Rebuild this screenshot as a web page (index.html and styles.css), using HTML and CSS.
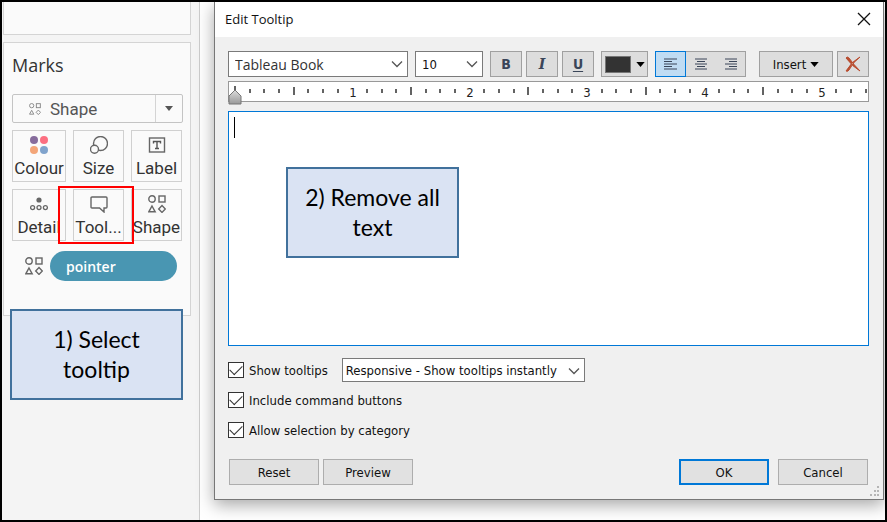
FILE: index.html
```html
<!DOCTYPE html>
<html lang="en">
<head>
<meta charset="utf-8">
<title>Edit Tooltip</title>
<link rel="stylesheet" href="styles.css">
</head>
<body>
<svg class="defs" aria-hidden="true">
  <symbol id="shapes" viewBox="0 0 18 18">
    <g fill="none" stroke="currentColor" stroke-width="1.4">
      <circle cx="4" cy="4" r="3.2"/><rect x="11" y="1" width="6" height="6"/>
      <path d="M4 11 L7.2 16.8 H0.8 Z"/><path d="M14 10.6 L17.3 14 L14 17.4 L10.7 14 Z"/>
    </g>
  </symbol>
  <symbol id="chevron" viewBox="0 0 12 8"><path d="M1 1.5 L6 6.5 L11 1.5" fill="none" stroke="#555" stroke-width="1.3"/></symbol>
  <symbol id="caret" viewBox="0 0 10 6"><path d="M0 0 H10 L5 6 Z" fill="currentColor"/></symbol>
</svg>
<main class="frame">
  <aside class="side">
    <section class="card filters"></section>
    <section class="card marks">
      <h2>Marks</h2>
      <div class="mark-type">
        <svg class="type-icon"><use href="#shapes"/></svg>
        <select aria-label="Mark type"><option>Shape</option></select>
        <span class="type-arrow"><svg><use href="#caret"/></svg></span>
      </div>
      <div class="mark-grid">
        <button type="button"><svg viewBox="0 0 18 18"><circle cx="4" cy="4" r="4" fill="#866c9c"/><circle cx="14" cy="4" r="4" fill="#fc6f81"/><circle cx="4" cy="14" r="4" fill="#f3a578"/><circle cx="14" cy="14" r="4" fill="#80a3cc"/></svg><span>Colour</span></button>
        <button type="button"><svg viewBox="0 0 18 18"><g fill="#fafafa" stroke="#666" stroke-width="1.4"><circle cx="10.5" cy="7.5" r="7"/><circle cx="4.5" cy="13.2" r="4"/></g></svg><span>Size</span></button>
        <button type="button"><svg viewBox="0 0 18 18"><rect x="1.5" y="2" width="15" height="14" fill="none" stroke="#666" stroke-width="1.4"/><path d="M5.5 7.5 V5.5 H12.5 V7.5 M9 5.5 V12.5 M7 12.5 H11" fill="none" stroke="#555" stroke-width="1.4"/></svg><span>Label</span></button>
        <button type="button"><svg viewBox="0 0 18 18"><circle cx="9" cy="5" r="2.6" fill="#666"/><g fill="none" stroke="#666" stroke-width="1.3"><circle cx="2.6" cy="12.6" r="2"/><circle cx="9" cy="12.6" r="2"/><circle cx="15.4" cy="12.6" r="2"/></g></svg><span>Detail</span></button>
        <button type="button" class="selected"><svg viewBox="0 0 18 18"><path d="M2 2 H16 Q17 2 17 3 V12 Q17 13 16 13 H14 V17 L9.5 13 H2 Q1 13 1 12 V3 Q1 2 2 2 Z" fill="none" stroke="#666" stroke-width="1.4"/></svg><span>Tool...</span></button>
        <button type="button"><svg><use href="#shapes"/></svg><span>Shape</span></button>
      </div>
      <div class="pill-row"><svg><use href="#shapes"/></svg><button type="button" class="pill">pointer</button></div>
    </section>
    <div class="callout step-one">1) Select tooltip</div>
  </aside>
  <div class="stage">
    <form class="dialog" role="dialog" aria-label="Edit Tooltip">
      <header class="titlebar">
        <h1>Edit Tooltip</h1>
        <button type="button" class="close" aria-label="Close"><svg viewBox="0 0 14 14"><path d="M1 1 L13 13 M13 1 L1 13" stroke="#111" stroke-width="1.3"/></svg></button>
      </header>
      <div class="content">
        <div class="toolbar">
          <div class="combo font"><select aria-label="Font"><option>Tableau Book</option></select><svg><use href="#chevron"/></svg></div>
          <div class="combo size"><select aria-label="Font size"><option>10</option></select><svg><use href="#chevron"/></svg></div>
          <div class="tools styles">
            <button type="button" class="tool bold">B</button>
            <button type="button" class="tool italic">I</button>
            <button type="button" class="tool under">U</button>
          </div>
          <button type="button" class="tool colour" aria-label="Text colour"><span class="swatch"></span><svg><use href="#caret"/></svg></button>
          <div class="tools aligns">
            <button type="button" class="tool on" aria-label="Align left"><svg viewBox="0 0 14 12"><path d="M0 1 H13 M0 3.5 H8 M0 6 H13 M0 8.5 H8 M0 11 H13"/></svg></button>
            <button type="button" class="tool" aria-label="Align centre"><svg viewBox="0 0 14 12"><path d="M1 1 H13 M3 3.5 H11 M1 6 H13 M3 8.5 H11 M1 11 H13"/></svg></button>
            <button type="button" class="tool" aria-label="Align right"><svg viewBox="0 0 14 12"><path d="M1 1 H13 M5 3.5 H13 M1 6 H13 M5 8.5 H13 M1 11 H13"/></svg></button>
          </div>
          <div class="tools last">
            <button type="button" class="tool insert">Insert <svg><use href="#caret"/></svg></button>
            <button type="button" class="tool" aria-label="Clear"><svg class="clear" viewBox="0 0 16 16"><path d="M1 2 Q2 0 4 2 Q9 9 15 15 Q8 11 1 2 Z M15 1 Q7 5 1 15 Q3 16 4 14 Q8 6 15 1 Z" fill="#b94d30" stroke="#b94d30" stroke-width="1" stroke-linejoin="round"/></svg></button>
          </div>
        </div>
        <div class="ruler">
          <svg class="scale">
            <path class="minor" d="M21 7v4M35 7v4M50 7v4M79 7v4M94 7v4M109 7v4M138 7v4M153 7v4M167 7v4M197 7v4M211 7v4M226 7v4M255 7v4M270 7v4M285 7v4M314 7v4M329 7v4M343 7v4M373 7v4M387 7v4M402 7v4M431 7v4M446 7v4M461 7v4M490 7v4M505 7v4M519 7v4M549 7v4M563 7v4M578 7v4M607 7v4M622 7v4M637 7v4"/>
            <path class="minor" d="M6 4v8M65 5v8M182 5v8M299 5v8M417 5v8M534 5v8"/>
            <text x="124" y="15">1</text><text x="241" y="15">2</text><text x="358" y="15">3</text><text x="476" y="15">4</text><text x="593" y="15">5</text>
          </svg>
          <svg class="marker" viewBox="0 0 14 16"><defs><linearGradient id="metal" x2="0" y2="1"><stop stop-color="#ddd"/><stop offset="1" stop-color="#999"/></linearGradient></defs><path d="M7 1 L13 7 V15 H1 V7 Z" fill="url(#metal)" stroke="#777"/></svg>
        </div>
        <div class="editor">
          <textarea aria-label="Tooltip text"></textarea>
          <span class="cursor"></span>
          <div class="callout step-two">2) Remove all text</div>
        </div>
        <div class="options">
          <div class="option"><label><input type="checkbox" checked>Show tooltips</label>
            <div class="combo mode"><select aria-label="Tooltip mode"><option>Responsive - Show tooltips instantly</option></select><svg><use href="#chevron"/></svg></div></div>
          <div class="option"><label><input type="checkbox" checked>Include command buttons</label></div>
          <div class="option"><label><input type="checkbox" checked>Allow selection by category</label></div>
        </div>
        <footer class="actions">
          <button type="reset">Reset</button>
          <button type="button">Preview</button>
          <button type="submit" class="ok">OK</button>
          <button type="button">Cancel</button>
        </footer>
      </div>
      <svg class="grip" viewBox="0 0 10 10"><path d="M7 0h2v2h-2zM4 4h2v2h-2zM7 4h2v2h-2zM0 8h2v2h-2zM4 8h2v2h-2zM7 8h2v2h-2z" fill="#b5b5b5"/></svg>
    </form>
  </div>
</main>
</body>
</html>
```
FILE: styles.css
```css
* { box-sizing: border-box; }
body {
  margin: 0;
  font-family: "DejaVu Sans Condensed", "DejaVu Sans", sans-serif;
  font-size: 13px;
  color: #111;
}
button, select, textarea { font: inherit; color: inherit; margin: 0; }
button { padding: 0; }
svg { display: block; flex: none; }
.defs { position: absolute; width: 0; height: 0; }

.frame {
  display: flex;
  min-height: 100vh;
  border: 2px solid #000;
  background: #fff;
  overflow: hidden;
}

/* Marks panel */
.side {
  position: relative;
  flex: none;
  width: 198px;
  padding: 0 8px 0 1px;
  border-right: 1px solid #ccc;
  background: #f4f4f4;
  font-family: Roboto, sans-serif;
  font-size: 17px;
  color: #333;
}
.card {
  border: 1px solid #d4d4d4;
  background: #fafafa;
}
.filters { height: 33px; border-top: 0; margin-bottom: 7px; }
.marks { height: 274px; padding: 8px 7px 0 8px; }
.marks h2 {
  margin: 0 0 14px;
  font-family: "Open Sans", sans-serif;
  font-size: 18px;
  font-weight: 400;
  line-height: 29px;
}
.mark-type {
  display: flex;
  align-items: center;
  height: 29px;
  padding-left: 16px;
  border: 1px solid #c4c4c4;
  border-radius: 2px;
  margin-bottom: 7px;
}
.type-icon { width: 12px; height: 12px; color: #888; }
.mark-type select {
  appearance: none;
  flex: 1;
  min-width: 0;
  padding: 0 0 0 9px;
  border: 0;
  background: none;
  color: #555;
}
.type-arrow {
  display: grid;
  place-items: center;
  width: 27px;
  height: 100%;
  border-left: 1px solid #d4d4d4;
  color: #555;
}
.type-arrow svg { width: 8px; height: 5px; }
.mark-grid {
  display: grid;
  grid-template-columns: 54px 51px 51px;
  column-gap: 7px;
  row-gap: 7px;
}
.mark-grid button {
  position: relative;
  display: flex;
  flex-direction: column;
  align-items: center;
  height: 52px;
  padding-top: 5px;
  border: 1px solid #d0d0d0;
  background: #fafafa;
}
.mark-grid svg, .pill-row svg { width: 18px; height: 18px; color: #666; }
.mark-grid span { line-height: 28px; }
.mark-grid .selected::after {
  content: "";
  position: absolute;
  z-index: 1;
  inset: -4px -11px -4px -16px;
  border: 2px solid #f00;
}
.pill-row {
  display: flex;
  align-items: center;
  gap: 7px;
  padding: 10px 6px 0 13px;
}
.pill {
  flex: 1;
  height: 30px;
  padding-left: 16px;
  border: 0;
  border-radius: 15px;
  background: #4996b2;
  color: #fff;
  font-family: "Open Sans", sans-serif;
  font-size: 14px;
  font-weight: 600;
  text-align: left;
}

/* Annotation boxes */
.callout {
  position: absolute;
  display: grid;
  place-items: center;
  width: 173px;
  height: 91px;
  padding: 0 16px 2px;
  border: 2px solid #41719c;
  background: #dae3f3;
  color: #000;
  font-family: Lato, sans-serif;
  font-size: 23px;
  line-height: 30px;
  text-align: center;
}
.step-one { left: 8px; top: 307px; padding: 0 36px 2px; }
.step-two { left: 58px; top: 56px; }

/* Dialog */
.stage { flex: 1; display: flex; min-width: 0; padding: 0 1px 20px 14px; }
.dialog {
  position: relative;
  flex: 1;
  display: flex;
  flex-direction: column;
  min-width: 0;
  border: 1px solid #777;
  border-top: 0;
  background: #f0f0f0;
  box-shadow: 0 5px 16px rgba(0, 0, 0, .35);
}
.titlebar {
  display: flex;
  align-items: center;
  justify-content: space-between;
  height: 35px;
  padding: 0 12px 2px 10px;
  background: #fff;
}
.titlebar h1 {
  margin: 0;
  font-family: "Open Sans", sans-serif;
  font-size: 13px;
  font-weight: 400;
}
.close { border: 0; background: none; }
.close svg { width: 14px; height: 14px; }
.content {
  flex: 1;
  display: flex;
  flex-direction: column;
  padding: 14px 14px 14px 13px;
}
.toolbar { display: flex; gap: 7px; height: 26px; margin-bottom: 4px; }
.combo {
  position: relative;
  display: flex;
  border: 1px solid #7a7a7a;
  background: #fff;
}
.combo select {
  appearance: none;
  width: 100%;
  padding: 0 24px 0 6px;
  border: 0;
  background: none;
}
.combo svg {
  position: absolute;
  right: 4px;
  top: 8px;
  width: 12px;
  height: 8px;
  pointer-events: none;
}
.font { width: 180px; }
.font select { font-family: "Open Sans", sans-serif; font-size: 14px; color: #333; }
.size { width: 68px; }
.tools { display: flex; gap: 4px; }
.tool {
  display: flex;
  align-items: center;
  justify-content: center;
  width: 32px;
  border: 1px solid #a0a0a0;
  background: #ddd;
}
.bold, .italic, .under { color: #3a4558; font-size: 14px; font-weight: 700; }
.italic { font-family: "DejaVu Serif", serif; font-style: italic; }
.under { text-decoration: underline; text-underline-offset: 2px; }
.colour { width: 47px; gap: 5px; }
.swatch { width: 26px; height: 17px; border: 1px solid #777; background: #333; }
.colour svg { width: 9px; height: 5px; color: #000; }
.aligns { gap: 0; }
.aligns .tool { width: 30px; border-left: 0; }
.aligns .tool:nth-child(2) { border-right: 0; }
.aligns .on { width: 31px; border: 1px solid #0078d7; background: #c0dcf3; }
.aligns svg { width: 14px; height: 12px; stroke: #3a4558; stroke-width: 1; }
.last { margin-left: auto; }
.insert { width: 74px; gap: 4px; }
.insert svg { width: 9px; height: 5px; color: #000; }
.clear { width: 16px; height: 16px; }

.ruler {
  position: relative;
  height: 21px;
  margin-bottom: 9px;
  border: 1px solid #999;
  background: #fff;
}
.scale { width: 100%; height: 19px; overflow: hidden; }
.scale text { font-size: 13px; text-anchor: middle; fill: #222; }
.minor { stroke: #222; stroke-width: 1.4; }
.marker { position: absolute; left: -1px; top: 7px; width: 14px; height: 16px; }

.editor { position: relative; flex: 1; display: flex; min-height: 150px; }
.editor textarea {
  flex: 1;
  padding: 6px;
  border: 1px solid #0078d7;
  background: #fff;
  resize: none;
  outline: 0;
}
.cursor {
  position: absolute;
  left: 6px;
  top: 6px;
  width: 1px;
  height: 21px;
  background: #000;
}

.options { padding-top: 9px; }
.option { display: flex; align-items: center; gap: 14px; height: 30px; }
.option label { display: flex; align-items: center; gap: 5px; }
.option input {
  appearance: none;
  display: grid;
  place-items: center;
  width: 16px;
  height: 16px;
  margin: 0;
  border: 1px solid #333;
  background: #fff;
}
.option input:checked::before {
  content: "";
  width: 11px;
  height: 6px;
  margin-bottom: 3px;
  border: solid #333;
  border-width: 0 0 1px 1px;
  transform: rotate(-45deg);
}
.mode { width: 243px; height: 24px; }
.mode select { padding-left: 3px; }

.actions { display: flex; gap: 4px; padding: 14px 1px 0; }
.actions button {
  width: 90px;
  height: 26px;
  border: 1px solid #adadad;
  background: #e1e1e1;
}
.actions .ok { margin: 0 5px 0 auto; border: 2px solid #0078d7; }
.grip { position: absolute; right: 3px; bottom: 3px; width: 10px; height: 10px; }
```
